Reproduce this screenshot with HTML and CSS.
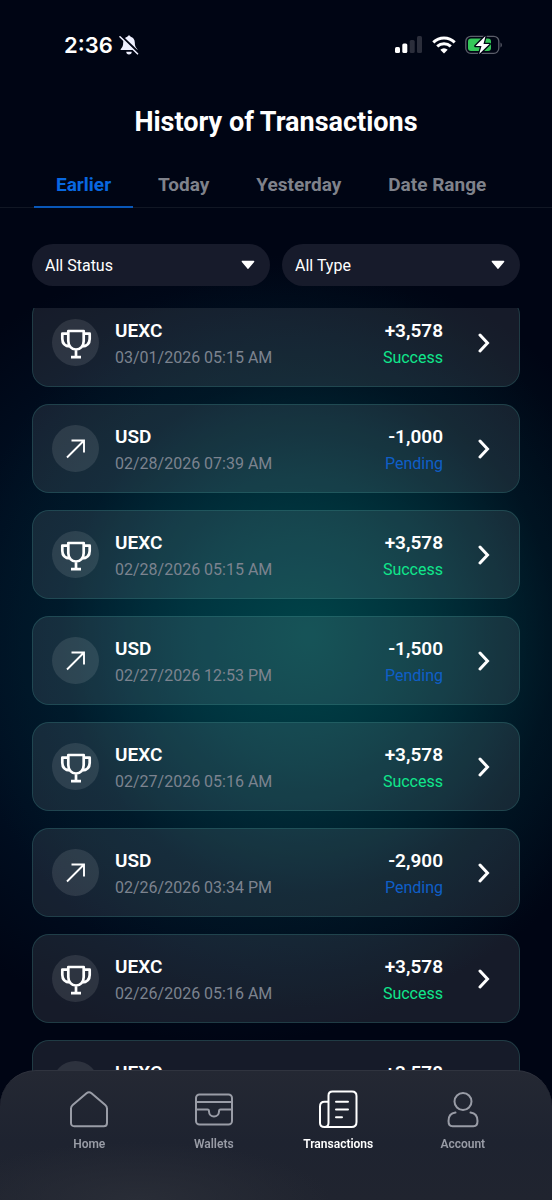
FILE: index.html
```html
<!DOCTYPE html>
<html lang="en">
<head>
<meta charset="utf-8">
<meta name="viewport" content="width=device-width, initial-scale=1">
<title>History of Transactions</title>
<link rel="stylesheet" href="styles.css">
</head>
<body>
<svg class="sprite" aria-hidden="true">
  <symbol id="trophy" viewBox="0 0 32 32">
    <path d="M8.300 4h15.400V14c0 5-3.200 8.500-7.700 8.500S8.300 19 8.300 14zM8.300 6.700H2.300v5c0 4.500 2.500 7.500 8 7.800M23.700 6.700h6v5c0 4.500-2.500 7.500-8 7.800M16 22.500V29.500M11 30.200h10" fill="none" stroke="currentColor" stroke-width="2.700" stroke-linejoin="round"/>
  </symbol>
  <symbol id="arrow" viewBox="0 0 32 32">
    <path d="M7 24.500L24 7.500M11.500 7.500H24v12" fill="none" stroke="currentColor" stroke-width="1.900"/>
  </symbol>
  <symbol id="chevron" viewBox="0 0 12 20">
    <path d="M2 2l7.500 8L2 18" fill="none" stroke="currentColor" stroke-width="3" stroke-linecap="round" stroke-linejoin="miter"/>
  </symbol>
  <symbol id="caret" viewBox="0 0 14 10">
    <path d="M1.500 1.500h11L7 8z" fill="currentColor" stroke="currentColor" stroke-width="1.700" stroke-linejoin="round"/>
  </symbol>
</svg>
<div class="app">
  <div class="status-bar">
    <div class="clock">
      <span>2:36</span>
      <svg width="20" height="20" viewBox="0 0 20 20" aria-label="Silent">
        <path d="M10 .5c.9 0 1.400.6 1.600 1.300 2.600.7 4.200 3 4.200 5.600 0 3.600.8 4.700 2 6 .5.600.7 1.100.6 1.700H1.600c-.1-.6.1-1.100.6-1.700 1.200-1.300 2-2.400 2-6 0-2.600 1.600-4.900 4.200-5.600C8.600 1.100 9.100.5 10 .5zM7.300 16.800h5.400a2.700 2.700 0 0 1-5.400 0z" fill="#eef0ff"/>
        <path d="M1.500.6l17.500 16.500" stroke="#000514" stroke-width="2.600"/>
        <path d="M1 1.800l17.500 17" stroke="#eef0ff" stroke-width="1.600" stroke-linecap="round"/>
      </svg>
    </div>
    <div class="signals">
      <svg width="28" height="18" viewBox="0 0 28 18" aria-label="Signal">
        <g fill="#fff"><rect x="0" y="11" width="5" height="6" rx="1.500"/><rect x="7.300" y="7.500" width="5" height="9.500" rx="1.500"/></g>
        <g fill="#2b2e3b"><rect x="14.700" y="4" width="5" height="13" rx="1.500"/><rect x="22" y="0" width="5" height="17" rx="1.500"/></g>
      </svg>
      <svg width="24" height="18" viewBox="0 0 24 18" aria-label="Wi-Fi">
        <g fill="none" stroke="#fff" stroke-width="3"><path d="M1.300 6.300a15.500 15.500 0 0 1 21.400 0"/><path d="M5.200 10.300a10 10 0 0 1 13.600 0"/></g>
        <path d="M12 17.500l-3.700-3.700a5.300 5.300 0 0 1 7.400 0z" fill="#fff"/>
      </svg>
      <svg width="38" height="20" viewBox="0 0 38 20" aria-label="Battery charging">
        <rect x=".8" y="1.300" width="33" height="17" rx="5" fill="none" stroke="#5b5e6a" stroke-width="1.300"/>
        <rect x="3" y="3.500" width="23" height="12.600" rx="3" fill="#35c759"/>
        <path d="M35.500 7.500c1.800.8 1.800 4.200 0 5z" fill="#5b5e6a"/>
        <path d="M20.500 1L10.500 11h6l-2.300 8L24.500 9h-6z" fill="#fff" stroke="#000514" stroke-width="2.600" stroke-linejoin="round" paint-order="stroke"/>
      </svg>
    </div>
  </div>

  <h1 class="title">History of Transactions</h1>

  <div class="tabs" role="tablist">
    <button class="tab tab-active" role="tab" aria-selected="true">Earlier</button>
    <button class="tab" role="tab" aria-selected="false">Today</button>
    <button class="tab" role="tab" aria-selected="false">Yesterday</button>
    <button class="tab" role="tab" aria-selected="false">Date Range</button>
  </div>

  <div class="filters">
    <div class="filter">
      <select class="filter-select" aria-label="Status"><option>All Status</option></select>
      <svg class="caret"><use href="#caret"/></svg>
    </div>
    <div class="filter">
      <select class="filter-select" aria-label="Type"><option>All Type</option></select>
      <svg class="caret"><use href="#caret"/></svg>
    </div>
  </div>

  <main class="scroller">
    <div class="list">
      <button class="card"><span class="badge"><svg class="badge-icon"><use href="#trophy"/></svg></span><span class="info"><span class="strong">UEXC</span><span class="date">03/01/2026 05:15 AM</span></span><span class="info amount"><span class="strong">+3,578</span><span class="success">Success</span></span><svg class="chevron"><use href="#chevron"/></svg></button>
      <button class="card"><span class="badge"><svg class="badge-icon"><use href="#arrow"/></svg></span><span class="info"><span class="strong">USD</span><span class="date">02/28/2026 07:39 AM</span></span><span class="info amount"><span class="strong">-1,000</span><span class="pending">Pending</span></span><svg class="chevron"><use href="#chevron"/></svg></button>
      <button class="card"><span class="badge"><svg class="badge-icon"><use href="#trophy"/></svg></span><span class="info"><span class="strong">UEXC</span><span class="date">02/28/2026 05:15 AM</span></span><span class="info amount"><span class="strong">+3,578</span><span class="success">Success</span></span><svg class="chevron"><use href="#chevron"/></svg></button>
      <button class="card"><span class="badge"><svg class="badge-icon"><use href="#arrow"/></svg></span><span class="info"><span class="strong">USD</span><span class="date">02/27/2026 12:53 PM</span></span><span class="info amount"><span class="strong">-1,500</span><span class="pending">Pending</span></span><svg class="chevron"><use href="#chevron"/></svg></button>
      <button class="card"><span class="badge"><svg class="badge-icon"><use href="#trophy"/></svg></span><span class="info"><span class="strong">UEXC</span><span class="date">02/27/2026 05:16 AM</span></span><span class="info amount"><span class="strong">+3,578</span><span class="success">Success</span></span><svg class="chevron"><use href="#chevron"/></svg></button>
      <button class="card"><span class="badge"><svg class="badge-icon"><use href="#arrow"/></svg></span><span class="info"><span class="strong">USD</span><span class="date">02/26/2026 03:34 PM</span></span><span class="info amount"><span class="strong">-2,900</span><span class="pending">Pending</span></span><svg class="chevron"><use href="#chevron"/></svg></button>
      <button class="card"><span class="badge"><svg class="badge-icon"><use href="#trophy"/></svg></span><span class="info"><span class="strong">UEXC</span><span class="date">02/26/2026 05:16 AM</span></span><span class="info amount"><span class="strong">+3,578</span><span class="success">Success</span></span><svg class="chevron"><use href="#chevron"/></svg></button>
      <button class="card"><span class="badge"></span><span class="info"><span class="strong">UEXC</span></span><span class="info amount"><span class="strong">+3,578</span></span><svg class="chevron"></svg></button>
    </div>
  </main>

  <nav class="nav">
    <a class="nav-item" href="#home">
      <svg class="nav-icon" viewBox="0 0 40 40"><path d="M2 18.500c0-1.500.5-2.500 1.700-3.500L17.500 3.200c1.600-1.300 3.400-1.300 5 0L36.300 15c1.200 1 1.700 2 1.700 3.500V33c0 2-1.200 3.200-3.200 3.200H5.200C3.200 36.200 2 35 2 33z"/></svg>
      Home
    </a>
    <a class="nav-item" href="#wallets">
      <svg class="nav-icon" viewBox="0 0 40 40"><rect x="2" y="4.500" width="36" height="30" rx="3.500"/><path d="M2 12h36M2 19.500h11.500c1.500 0 1.500 1 1.500 2a5 5 0 0 0 10 0c0-1 0-2 1.500-2H38"/></svg>
      Wallets
    </a>
    <a class="nav-item nav-active" href="#transactions" aria-current="page">
      <svg class="nav-icon" viewBox="0 0 40 40"><path d="M10.500 5.500c0-2.700 1.300-4 4-4H34c3 0 4.500 1.500 4.500 4.500v26c0 3.500-1.500 5-5 5H6.500M10.500 5.500V33c0 2.700-1.300 4-4 4s-4.500-1.300-4.500-4V16.500c0-3 1.500-4.700 4.500-4.700h4M18 11.700h12M18 19.500h12M18 27.200h6" stroke-linecap="round"/></svg>
      Transactions
    </a>
    <a class="nav-item" href="#account">
      <svg class="nav-icon" viewBox="0 0 40 40"><circle cx="20" cy="11.500" r="8.500"/><path d="M12.500 22.500c-4.500.5-7 3.500-7 8.500 0 3.800 1 5.200 4 5.200h21c3 0 4-1.400 4-5.200 0-5-2.500-8-7-8.500" stroke-linecap="round"/></svg>
      Account
    </a>
  </nav>
</div>
</body>
</html>
```
FILE: styles.css
```css
* { box-sizing: border-box; }

body {
  margin: 0;
  background: #000514;
  color: #fff;
  font-family: Roboto, "Liberation Sans", sans-serif;
}

button, select { font: inherit; color: inherit; }

.sprite { display: none; }

.app {
  display: flex;
  flex-direction: column;
  height: 100vh;
  overflow: hidden;
  background:
    radial-gradient(ellipse 64% 31% at 56% 53%, rgba(0, 72, 74, 0.88), rgba(0, 62, 66, 0.68) 35%, rgba(0, 36, 44, 0.36) 70%, rgba(0, 12, 26, 0)),
    radial-gradient(ellipse 72% 33% at 42% 54%, rgba(0, 50, 84, 0.7), rgba(0, 34, 60, 0.5) 50%, rgba(0, 10, 30, 0)),
    #000514;
}

.status-bar {
  display: flex;
  justify-content: space-between;
  align-items: center;
  padding: 32px 49px 0 64px;
  height: 58px;
}

.clock {
  display: flex;
  align-items: center;
  gap: 6px;
  font: 600 22px/26px Inter, sans-serif;
}

.signals {
  display: flex;
  align-items: center;
  gap: 9px;
}

.title {
  margin: 48px 0 0;
  text-align: center;
  font-size: 27px;
  font-weight: 700;
  line-height: 32px;
}

.tabs {
  display: flex;
  gap: 3px;
  margin-top: 26px;
  padding: 0 34px;
  border-bottom: 1px solid #111724;
}

.tab {
  margin-bottom: -1px;
  padding: 9px 22px;
  border: 0;
  border-bottom: 2px solid transparent;
  background: none;
  color: #7f828b;
  font-size: 19px;
  font-weight: 700;
  line-height: 24px;
  white-space: nowrap;
}

.tab-active {
  border-color: #0957b8;
  color: #0868e0;
}

.filters {
  display: grid;
  grid-template-columns: 1fr 1fr;
  gap: 12px;
  margin: 36px 32px 22px;
}

.filter {
  display: grid;
  align-items: center;
  border-radius: 21px;
  background: #171b2b;
}

.filter > * { grid-area: 1 / 1; }

.filter-select {
  appearance: none;
  width: 100%;
  height: 42px;
  padding: 0 40px 0 13px;
  border: 0;
  border-radius: 21px;
  background: transparent;
  font-size: 16px;
}

.caret {
  justify-self: end;
  width: 14px;
  height: 10px;
  margin-right: 15px;
  pointer-events: none;
}

.scroller {
  flex: 1;
  min-height: 0;
  overflow: hidden;
  padding: 0 32px;
}

/* The first card is partly scrolled under the filters. */
.list {
  display: flex;
  flex-direction: column;
  gap: 17px;
  margin-top: -10px;
}

.card {
  display: flex;
  align-items: center;
  flex-shrink: 0;
  height: 89px;
  padding: 0 29px 0 19px;
  border: 1px solid rgba(60, 150, 145, 0.26);
  border-radius: 17px;
  background: rgba(245, 255, 255, 0.09);
  text-align: left;
}

.badge {
  display: grid;
  place-items: center;
  width: 47px;
  height: 47px;
  margin-right: 16px;
  border-radius: 50%;
  background: rgba(255, 255, 255, 0.1);
}

.badge-icon { width: 32px; height: 32px; }

.info {
  display: flex;
  flex-direction: column;
  height: 56px;
  padding-top: 2px;
  font-size: 16px;
  line-height: 27px;
}

.amount {
  margin-left: auto;
  margin-right: 35px;
  text-align: right;
}

.strong {
  font-size: 19px;
  font-weight: 600;
}

.date { color: #7c838f; }
.success { color: #10e68b; }
.pending { color: #0f5fc8; }

.chevron { width: 12px; height: 20px; }

.nav {
  position: fixed;
  right: 0;
  bottom: 0;
  left: 0;
  display: grid;
  grid-template-columns: repeat(4, 1fr);
  padding: 19px 27px 47px;
  border-top: 1px solid #30343f;
  border-radius: 36px 36px 0 0;
  background:
    radial-gradient(ellipse 35% 45% at 25% 100%, #292d37, transparent),
    linear-gradient(#242833, #1e2330 55%, #20242f);
}

.nav-item {
  display: flex;
  flex-direction: column;
  align-items: center;
  gap: 5px;
  color: #999ca6;
  font-size: 12px;
  font-weight: 600;
  line-height: 18px;
  text-decoration: none;
}

.nav-active { color: #fff; }

.nav-icon {
  width: 40px;
  height: 40px;
  fill: none;
  stroke: currentColor;
  stroke-width: 2;
}
```
